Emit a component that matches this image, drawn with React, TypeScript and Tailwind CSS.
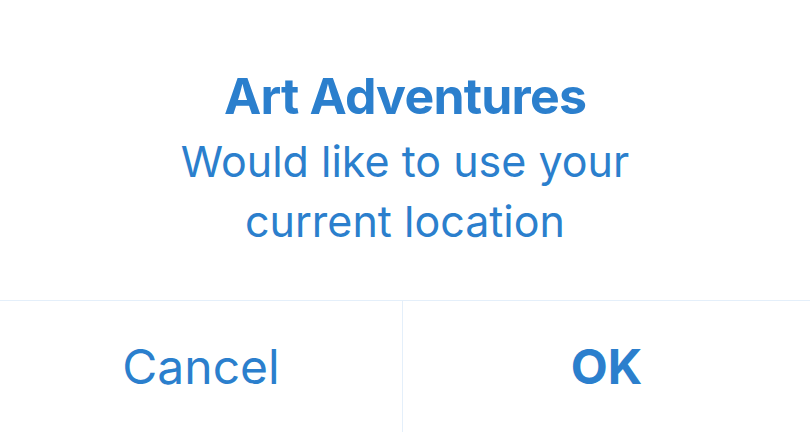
export default function App() {
  return (
    <div className="w-[810px] h-[432px] bg-white flex flex-col text-[#2b7fcd]" style={{ fontFamily: 'Inter, "Noto Sans", sans-serif' }}>
      <div className="h-[300px] flex flex-col items-center pt-[66px]">
        <div className="text-[50px] leading-[60px] font-bold tracking-[-0.8px]">Art Adventures</div>
        <div className="mt-[5px] text-[43px] leading-[60px] text-center">
          Would like to use your
          <br />
          current location
        </div>
      </div>
      <div className="h-px bg-[#e4effa]" />
      <div className="flex flex-1">
        <div className="w-[403px] flex items-center justify-center text-[48px] border-r border-[#e4effa]">Cancel</div>
        <div className="flex-1 flex items-center justify-center text-[48px] font-bold">OK</div>
      </div>
    </div>
  );
}
